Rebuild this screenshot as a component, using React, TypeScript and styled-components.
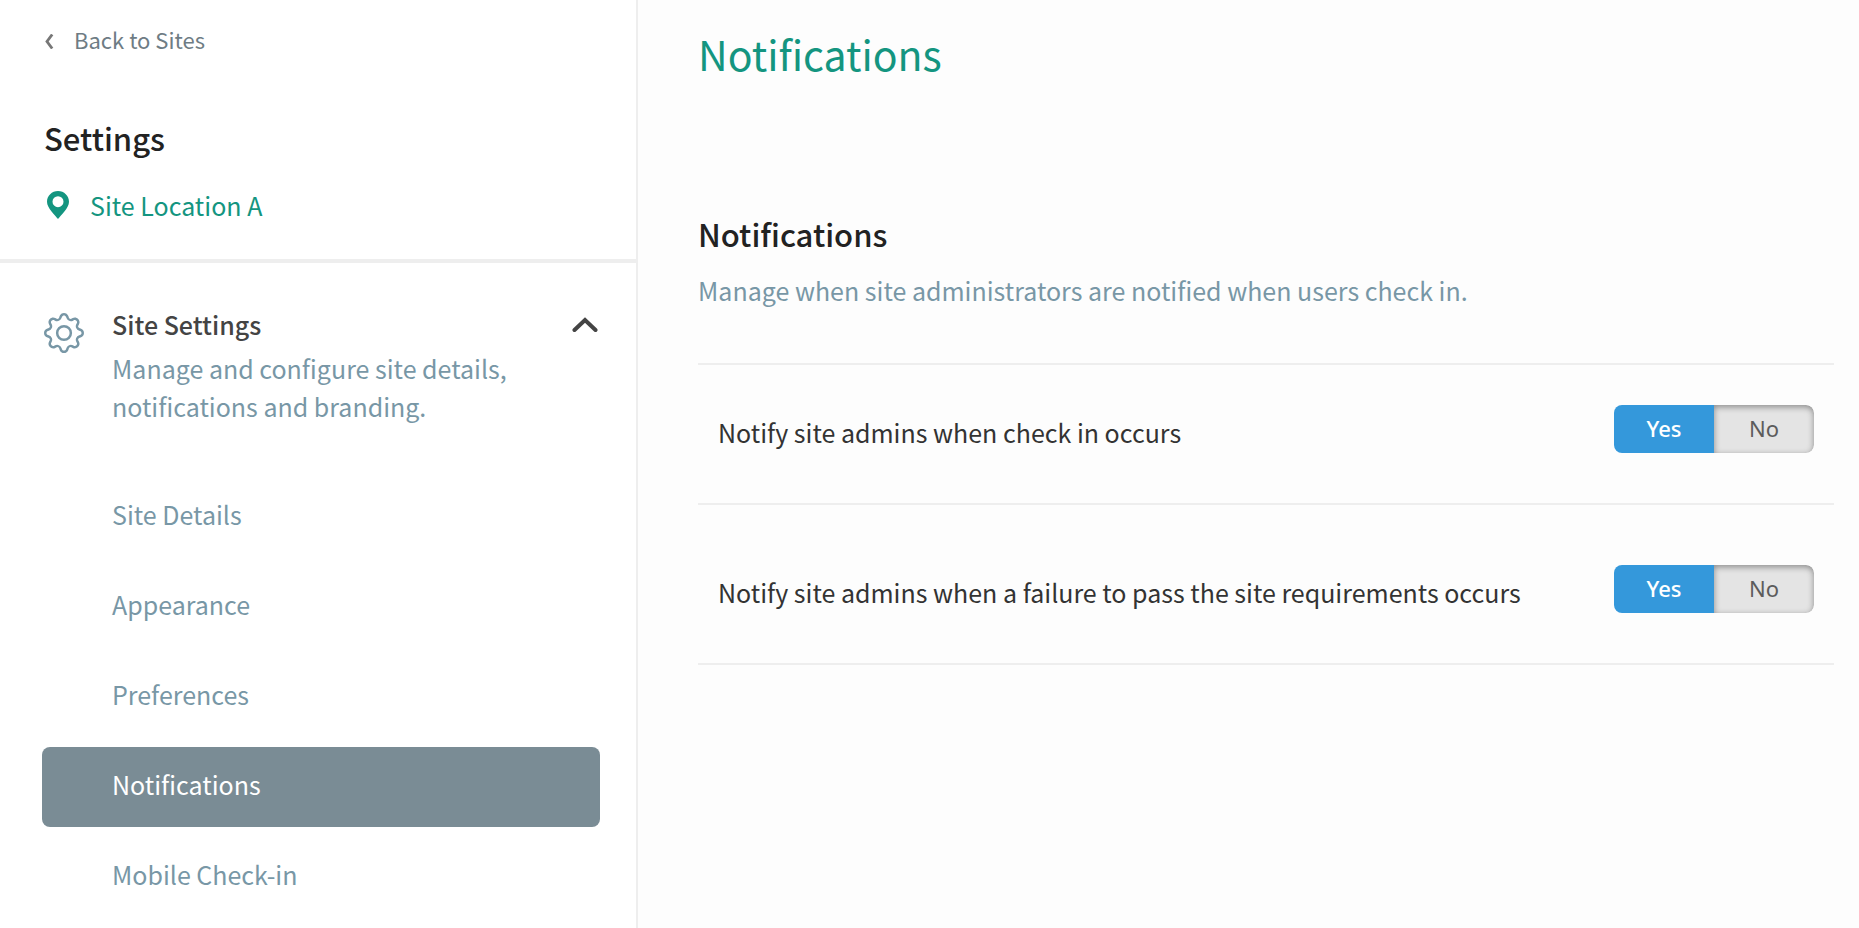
import React, { useState } from "react";
import styled, { createGlobalStyle } from "styled-components";
import { BsGear } from "react-icons/bs";

const GlobalStyle = createGlobalStyle`
  *, *::before, *::after { box-sizing: border-box; }
  body {
    margin: 0;
    background: #fdfdfd;
    color: #333;
    font-family: "Source Sans Pro", "Noto Sans CJK SC", "Noto Sans", sans-serif;
    font-size: 25px;
    line-height: 38px;
  }
  h1, h2, h3, p, ul { margin: 0; padding: 0; }
  ul { list-style: none; }
  a { color: inherit; text-decoration: none; }
`;

const Page = styled.div`
  display: flex;
  min-height: 100vh;
`;

const Sidebar = styled.aside`
  flex: 0 0 638px;
  background: #fff;
  border-right: 2px solid #eee;
`;

const SidebarHeader = styled.header`
  display: flex;
  flex-direction: column;
  align-items: flex-start;
  padding: 20px 44px 35px;
  border-bottom: 4px solid #eee;
`;

const BackLink = styled.a`
  display: flex;
  align-items: center;
  gap: 20px;
  color: #6e7c84;
  font-size: 22px;
  line-height: 38px;

  svg { margin-top: 5px; }
`;

const Heading = styled.h2`
  color: #222;
  font-size: 31px;
  font-weight: 500;
  line-height: 40px;
`;

const SidebarTitle = styled(Heading)`
  margin-top: 60px;
`;

const Location = styled.p`
  display: flex;
  align-items: center;
  gap: 21px;
  margin-top: 28px;
  padding-left: 3px;
  color: #149580;
`;

const Section = styled.section`
  padding: 42px 36px 0 42px;
`;

const SectionToggle = styled.button`
  display: grid;
  grid-template-columns: 40px 1fr 26px;
  column-gap: 28px;
  width: 100%;
  padding: 0 2px;
  border: 0;
  background: none;
  font: inherit;
  text-align: left;
  cursor: pointer;
`;

const GearIcon = styled(BsGear)`
  margin-top: 8px;
  color: #7897a6;
`;

const SectionText = styled.span`
  display: flex;
  flex-direction: column;
  gap: 6px;
`;

const SectionName = styled.span`
  color: #444;
  font-weight: 500;
`;

const Muted = styled.span`
  color: #7897a6;
`;

const Chevron = styled.svg`
  margin-top: 12px;
`;

const Menu = styled.ul`
  display: flex;
  flex-direction: column;
  gap: 10px;
  margin-top: 52px;
`;

const MenuLink = styled.a<{ $active: boolean }>`
  display: block;
  padding: 0 70px 6px;
  border-radius: 8px;
  background: ${(p) => (p.$active ? "#7a8c95" : "transparent")};
  color: ${(p) => (p.$active ? "#fff" : "#7897a6")};
  line-height: 74px;
`;

const Main = styled.main`
  flex: 1;
  min-width: 0;
  padding: 23px 25px 40px 60px;
`;

const Title = styled.h1`
  color: #149580;
  font-size: 41px;
  font-weight: 400;
  line-height: 60px;
`;

const Group = styled.section`
  margin-top: 131px;
`;

const Description = styled.p`
  margin-top: 17px;
  color: #7897a6;
`;

const Options = styled.div`
  margin-top: 54px;
  border-top: 2px solid #eee;
`;

const OptionRow = styled.fieldset`
  display: flex;
  align-items: flex-start;
  justify-content: space-between;
  gap: 20px;
  margin: 0;
  padding: 60px 20px 40px;
  border: 0;
  border-bottom: 2px solid #eee;

  &:first-child { padding-top: 40px; }
`;

const OptionLabel = styled.span`
  line-height: 54px;
  padding-bottom: 4px;
`;

const Switch = styled.span`
  display: flex;
  flex: none;
  width: 200px;
  height: 48px;
  border-radius: 8px;
  overflow: hidden;
`;

const Choice = styled.label<{ $on: boolean }>`
  flex: 1;
  background: ${(p) => (p.$on ? "#3498db" : "#e4e4e4")};
  box-shadow: ${(p) => (p.$on ? "none" : "inset 0 2px 6px rgba(0, 0, 0, 0.4)")};
  border-radius: ${(p) => (p.$on ? "0" : "0 8px 8px 0")};
  color: ${(p) => (p.$on ? "#fff" : "#5c5c5c")};
  font-family: "Noto Sans", sans-serif;
  font-weight: ${(p) => (p.$on ? 500 : 400)};
  font-size: 22px;
  line-height: 46px;
  text-align: center;
  cursor: pointer;
`;

const HiddenRadio = styled.input`
  position: absolute;
  opacity: 0;
  pointer-events: none;
`;

function YesNoRow({ name, label }: { name: string; label: string }) {
  const [value, setValue] = useState("Yes");
  return (
    <OptionRow aria-labelledby={`${name}-label`}>
      <OptionLabel id={`${name}-label`}>{label}</OptionLabel>
      <Switch>
        {["Yes", "No"].map((choice) => (
          <Choice key={choice} $on={value === choice}>
            <HiddenRadio
              type="radio"
              name={name}
              value={choice}
              checked={value === choice}
              onChange={() => setValue(choice)}
            />
            {choice}
          </Choice>
        ))}
      </Switch>
    </OptionRow>
  );
}

const menuItems = ["Site Details", "Appearance", "Preferences", "Notifications", "Mobile Check-in"];

export default function App() {
  return (
    <>
      <GlobalStyle />
      <Page>
        <Sidebar>
          <SidebarHeader>
            <BackLink href="#sites">
              <svg width="10" height="15" viewBox="0 0 10 15" aria-hidden="true">
                <path d="M8.2 0.5L3 7.5L8.2 14.5" fill="none" stroke="#777" strokeWidth="2.8" />
              </svg>
              Back to Sites
            </BackLink>
            <SidebarTitle>Settings</SidebarTitle>
            <Location>
              <svg width="22" height="28" viewBox="0 0 22 28" aria-hidden="true">
                <path
                  fill="#149580"
                  fillRule="evenodd"
                  d="M11 28C8 24.2 0 17.2 0 10.8C0 4.8 4.9 0 11 0S22 4.8 22 10.8C22 17.2 14 24.2 11 28ZM11 5.2A5.5 5.5 0 1 0 11 16.2A5.5 5.5 0 1 0 11 5.2Z"
                />
              </svg>
              Site Location A
            </Location>
          </SidebarHeader>
          <Section>
            <SectionToggle type="button" aria-expanded="true">
              <GearIcon size={40} aria-hidden="true" />
              <SectionText>
                <SectionName>Site Settings</SectionName>
                <Muted>Manage and configure site details, notifications and branding.</Muted>
              </SectionText>
              <Chevron width="26" height="16" viewBox="0 0 26 16" aria-hidden="true">
                <path d="M2.5 13L13 3L23.5 13" fill="none" stroke="#444" strokeWidth="4" strokeLinecap="round" />
              </Chevron>
            </SectionToggle>
            <nav aria-label="Site Settings">
              <Menu>
                {menuItems.map((item) => (
                  <li key={item}>
                    <MenuLink
                      href={`#${item.toLowerCase().replace(" ", "-")}`}
                      $active={item === "Notifications"}
                      aria-current={item === "Notifications" ? "page" : undefined}
                    >
                      {item}
                    </MenuLink>
                  </li>
                ))}
              </Menu>
            </nav>
          </Section>
        </Sidebar>
        <Main>
          <Title>Notifications</Title>
          <Group>
            <Heading>Notifications</Heading>
            <Description>Manage when site administrators are notified when users check in.</Description>
            <Options>
              <YesNoRow name="check-in" label="Notify site admins when check in occurs" />
              <YesNoRow
                name="failure"
                label="Notify site admins when a failure to pass the site requirements occurs"
              />
            </Options>
          </Group>
        </Main>
      </Page>
    </>
  );
}
